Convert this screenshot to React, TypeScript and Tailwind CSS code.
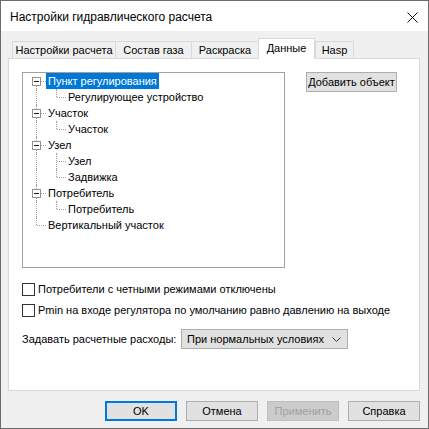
import React from 'react';

const font = { fontFamily: '"Liberation Sans", Arial, sans-serif' };

type Node = { label: string; level: 0 | 1; box?: boolean; last?: boolean; mid?: boolean; selected?: boolean };

const rows: Node[] = [
  { label: 'Пункт регулирования', level: 0, box: true, selected: true },
  { label: 'Регулирующее устройство', level: 1, last: true },
  { label: 'Участок', level: 0, box: true },
  { label: 'Участок', level: 1, last: true },
  { label: 'Узел', level: 0, box: true },
  { label: 'Узел', level: 1, mid: true },
  { label: 'Задвижка', level: 1, last: true },
  { label: 'Потребитель', level: 0, box: true },
  { label: 'Потребитель', level: 1, last: true },
  { label: 'Вертикальный участок', level: 0 },
];

function TreeRow({ node, index }: { node: Node; index: number }) {
  const first = index === 0;
  const lastRow = index === rows.length - 1;
  return (
    <div className="flex h-[16px] items-center">
      <div className={`relative h-[16px] shrink-0 ${node.level === 0 ? 'w-[23px]' : 'w-[43px]'}`}>
        {/* root level vertical line */}
        <div
          className={`absolute left-[13px] w-0 border-l border-dotted border-[#a0a0a0] ${
            first ? 'top-[8px] bottom-0' : lastRow ? 'top-0 h-[8px]' : 'top-0 bottom-0'
          }`}
        />
        {node.level === 0 && node.box && (
          <>
            <div className="absolute left-[18px] top-[8px] h-0 w-[5px] border-t border-dotted border-[#a0a0a0]" />
            <div className="absolute left-[9px] top-[4px] flex h-[9px] w-[9px] items-center justify-center border border-[#919191] bg-white">
              <div className="h-px w-[5px] bg-[#1e1e1e]" />
            </div>
          </>
        )}
        {node.level === 0 && !node.box && (
          <div className="absolute left-[14px] top-[8px] h-0 w-[9px] border-t border-dotted border-[#a0a0a0]" />
        )}
        {node.level === 1 && (
          <>
            <div
              className={`absolute left-[33px] w-0 border-l border-dotted border-[#a0a0a0] ${
                node.mid ? 'top-0 bottom-0' : 'top-0 h-[8px]'
              }`}
            />
            <div className="absolute left-[34px] top-[8px] h-0 w-[9px] border-t border-dotted border-[#a0a0a0]" />
          </>
        )}
      </div>
      <div
        className={`flex h-[16px] items-center whitespace-nowrap px-[2px] ${
          node.selected ? 'bg-[#0078d7] text-white' : 'text-black'
        }`}
      >
        {node.label}
      </div>
    </div>
  );
}

function Tab({ label, selected, w }: { label: string; selected?: boolean; w: string }) {
  return selected ? (
    <div className={`relative -mb-px flex h-[21px] items-start justify-center whitespace-nowrap border border-b-0 border-[#d9d9d9] bg-white pt-[4px] ${w}`}>
      {label}
    </div>
  ) : (
    <div className={`-mr-px flex h-[17px] items-center justify-center whitespace-nowrap border border-b-0 border-[#d9d9d9] bg-[#f0f0f0] ${w}`}>
      {label}
    </div>
  );
}

function Btn({ children, primary, disabled, className = '' }: { children: React.ReactNode; primary?: boolean; disabled?: boolean; className?: string }) {
  const base = 'flex h-[20px] items-center justify-center whitespace-nowrap';
  if (primary) return <div className={`${base} border-2 border-[#0078d7] bg-[#e1e1e1] ${className}`}>{children}</div>;
  if (disabled) return <div className={`${base} border border-[#bfbfbf] bg-[#cccccc] text-[#a0a0a0] ${className}`}>{children}</div>;
  return <div className={`${base} border border-[#adadad] bg-[#e1e1e1] ${className}`}>{children}</div>;
}

function Check({ label }: { label: string }) {
  return (
    <div className="flex h-[17px] items-center gap-[3px]">
      <div className="h-[13px] w-[13px] border border-[#333333] bg-white" />
      <span className="whitespace-nowrap">{label}</span>
    </div>
  );
}

export default function App() {
  return (
    <div style={font} className="flex h-[429px] w-[429px] flex-col border border-[#6b6b6b] text-[11px] leading-none text-black">
      <div className="flex h-[30px] shrink-0 items-center justify-between bg-white pl-[9px] pr-[10px]">
        <span className="whitespace-nowrap pt-px text-[12px]">Настройки гидравлического расчета</span>
        <svg width="11" height="11" viewBox="0 0 11 11" className="mt-[2px]">
          <path d="M0.5 0.5 L10.5 10.5 M10.5 0.5 L0.5 10.5" stroke="#111" strokeWidth="1" fill="none" />
        </svg>
      </div>

      <div className="flex flex-1 flex-col bg-[#f0f0f0] px-[7px] pt-[7px]">
        <div className="relative z-10 flex h-[20px] items-end pl-[4px]">
          <Tab label="Настройки расчета" w="w-[104px]" />
          <Tab label="Состав газа" w="w-[77px]" />
          <Tab label="Раскраска" w="w-[68px]" />
          <Tab label="Данные" selected w="w-[57px]" />
          <Tab label="Hasp" w="w-[39px]" />
        </div>

        <div className="flex h-[333px] w-[412px] flex-col border border-[#d9d9d9] bg-white pl-[13px] pt-[13px]">
          <div className="flex items-start">
            <div className="h-[196px] w-[263px] border border-[#a0a0a0] bg-white">
              {rows.map((r, i) => (
                <TreeRow key={i} node={r} index={i} />
              ))}
            </div>
            <Btn className="ml-[21px] w-[91px]">Добавить объект</Btn>
          </div>

          <div className="mt-[13px]">
            <Check label="Потребители с четными режимами отключены" />
          </div>
          <div className="mt-[4px]">
            <Check label="Pmin на входе регулятора по умолчанию равно давлению на выходе" />
          </div>

          <div className="mt-[10px] flex h-[20px] items-center">
            <span className="w-[159px] whitespace-nowrap">Задавать расчетные расходы:</span>
            <div className="flex h-[20px] w-[167px] items-center justify-between border border-[#adadad] bg-[#e1e1e1] pl-[5px] pr-[6px]">
              <span className="whitespace-nowrap">При нормальных условиях</span>
              <svg width="9" height="5" viewBox="0 0 9 5">
                <path d="M0.5 0.5 L4.5 4.5 L8.5 0.5" stroke="#333" strokeWidth="1" fill="none" />
              </svg>
            </div>
          </div>
        </div>

        <div className="mt-[10px] flex justify-end gap-[9px] pr-px">
          <Btn primary className="w-[72px]">OK</Btn>
          <Btn className="w-[72px]">Отмена</Btn>
          <Btn disabled className="w-[72px]">Применить</Btn>
          <Btn className="w-[72px]">Справка</Btn>
        </div>
      </div>
    </div>
  );
}
